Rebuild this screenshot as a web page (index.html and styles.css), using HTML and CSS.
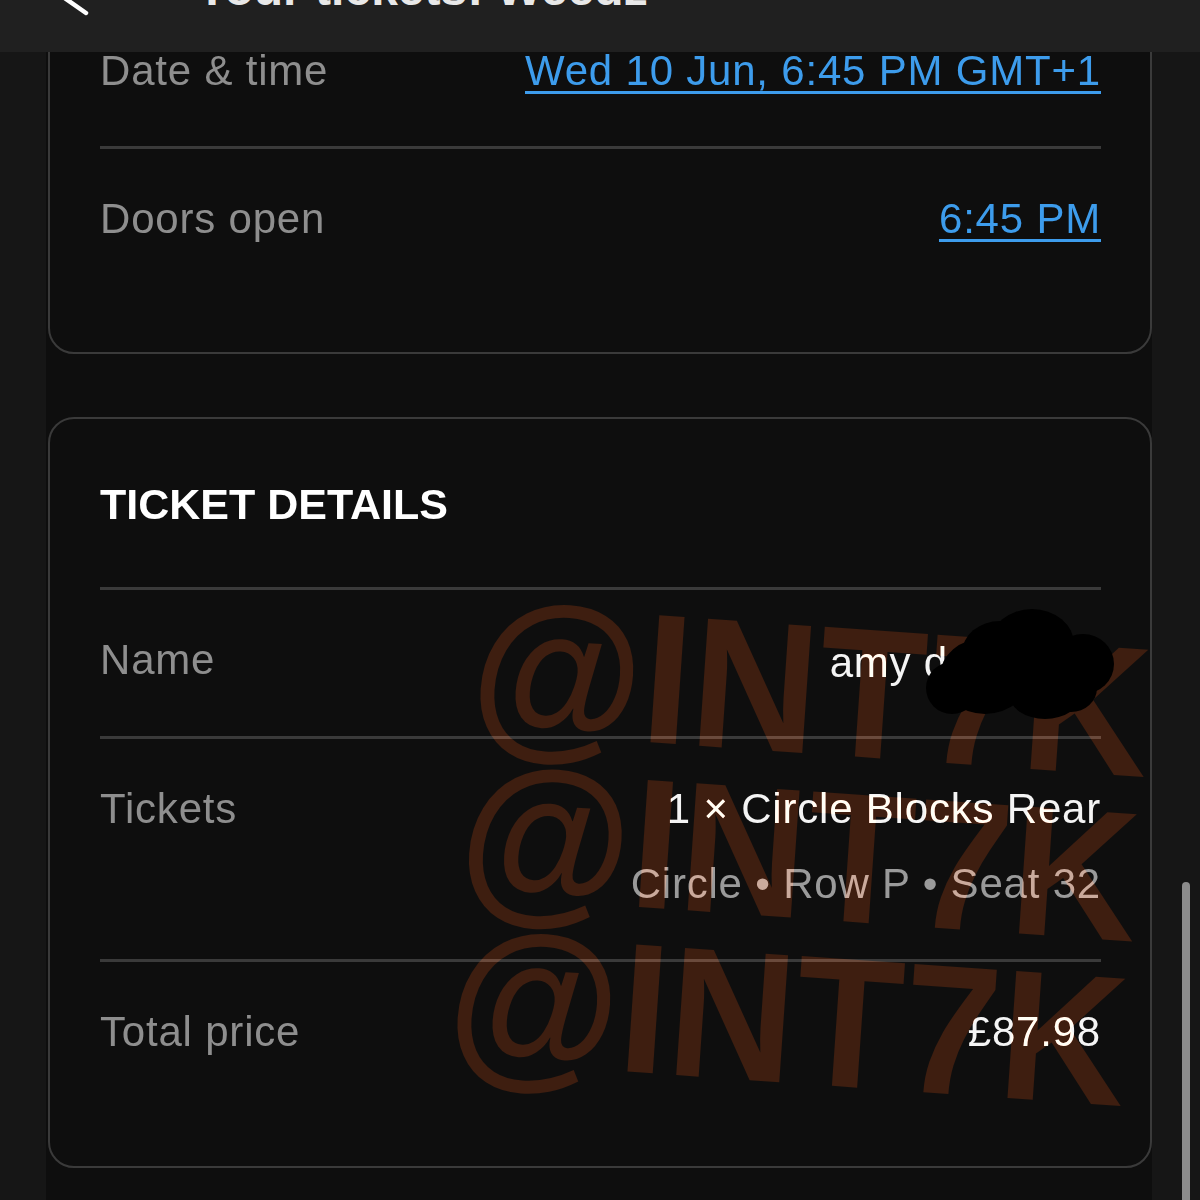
FILE: index.html
```html
<!DOCTYPE html>
<html lang="en">
<head>
    <meta charset="UTF-8">
    <meta name="viewport" content="width=device-width, initial-scale=1.0">
    <title>Your tickets</title>
    <link rel="stylesheet" href="styles.css">
</head>
<body>
    <div class="topbar">
        <div class="topbar-inner">
            <svg class="back" width="40" height="56" viewBox="0 0 40 56">
                <path d="M34 9 L4 31 L34 52" fill="none" stroke="#ffffff" stroke-width="4.5" stroke-linecap="round" stroke-linejoin="round"/>
            </svg>
            <h1 class="title">Your tickets: Weedz</h1>
        </div>
    </div>

    <div class="page">
        <div class="card card-first">
            <div class="row">
                <span class="label">Date &amp; time</span>
                <a class="value link" href="#">Wed 10 Jun, 6:45 PM GMT+1</a>
            </div>
            <div class="row">
                <span class="label">Doors open</span>
                <a class="value link" href="#">6:45 PM</a>
            </div>
        </div>

        <div class="card card-details">
            <!-- watermark sits over the rows -->
            <div class="watermark">@INT7K<br>@INT7K<br>@INT7K</div>

            <h2 class="card-title">TICKET DETAILS</h2>
            <div class="row">
                <span class="label">Name</span>
                <span class="value">amy d<span class="redact"><svg width="190" height="112" viewBox="0 0 190 112">
                    <g fill="#000">
                        <ellipse cx="107" cy="36" rx="42" ry="35"/>
                        <ellipse cx="75" cy="45" rx="38" ry="32"/>
                        <ellipse cx="60" cy="68" rx="45" ry="38"/>
                        <ellipse cx="27" cy="80" rx="26" ry="26"/>
                        <ellipse cx="158" cy="56" rx="31" ry="30"/>
                        <ellipse cx="120" cy="86" rx="36" ry="25"/>
                        <ellipse cx="146" cy="80" rx="26" ry="24"/>
                        <ellipse cx="110" cy="62" rx="40" ry="30"/>
                    </g>
                </svg></span></span>
            </div>
            <div class="row">
                <span class="label">Tickets</span>
                <div class="value-stack">
                    <span class="value">1 × Circle Blocks Rear</span>
                    <span class="sub">Circle • Row P • Seat 32</span>
                </div>
            </div>
            <div class="row">
                <span class="label">Total price</span>
                <span class="value">£87.98</span>
            </div>
        </div>
    </div>

    <div class="scroll-thumb"></div>
</body>
</html>
```

FILE: styles.css
```css
body {
    margin: 0;
    padding: 0;
    background: #161616;
    font-family: 'Liberation Sans', Arial, sans-serif;
    color: #f2f2f2;
    height: 1200px;
    overflow: hidden;
}

.topbar {
    position: fixed;
    top: 0;
    left: 0;
    right: 0;
    height: 52px;
    overflow: hidden;
    background: #202020;
    z-index: 10;
}

.topbar-inner {
    display: flex;
    align-items: center;
    height: 56px;
    margin-top: -39px;
    padding-left: 52px;
}

.back {
    overflow: visible;
    flex-shrink: 0;
}

.title {
    margin: 0 0 0 104px;
    font-size: 48px;
    line-height: 56px;
    font-weight: bold;
    color: #e8e8e8;
}

.page {
    margin-left: 46px;
    width: 1106px;
    min-height: 1200px;
    background: #0e0e0e;
    padding-top: 1px;
    box-sizing: border-box;
}

.card {
    position: relative;
    margin: 0 0 0 2px;
    padding: 0 49px 59px 50px;
    border: 2px solid #3a3a3a;
    border-radius: 26px;
    background: #0e0e0e;
}

.card-first {
    margin-top: -3px;
    padding-bottom: 58px;
}

.card-details {
    margin-top: 63px;
    padding-top: 60px;
}

.card-title {
    margin: 0;
    padding-bottom: 58px;
    font-size: 43px;
    line-height: 50px;
    font-weight: bold;
    color: #ffffff;
}

.row {
    display: flex;
    justify-content: space-between;
    align-items: flex-start;
    padding: 45px 0 50px;
    border-top: 3px solid #3a3a3a;
    font-size: 42px;
    line-height: 50px;
    letter-spacing: 0.8px;
}

.card-first .row:first-child {
    border-top: none;
    padding-top: 46px;
    padding-bottom: 50px;
}

.card-details .row:nth-of-type(2) {
    padding-bottom: 48px;
}

.label {
    color: #8e8e8e;
}

.value {
    color: #f4f4f4;
    text-align: right;
}

.link {
    color: #3d9cec;
    text-decoration: underline;
    text-decoration-thickness: 3px;
    text-underline-offset: 6px;
}

.value-stack {
    display: flex;
    flex-direction: column;
    align-items: flex-end;
    gap: 25px;
}

.sub {
    color: #9a9a9a;
}

.redact {
    position: relative;
    display: inline-block;
    width: 153px;
    height: 42px;
}

.redact svg {
    position: absolute;
    left: -23px;
    top: -27px;
}

.watermark {
    position: absolute;
    left: 428px;
    top: 165px;
    font-size: 185px;
    line-height: 165px;
    font-weight: bold;
    color: rgb(48, 16, 2);
    mix-blend-mode: plus-lighter;
    white-space: nowrap;
    transform-origin: left top;
    transform: rotate(4deg) scaleX(0.95);
    pointer-events: none;
}

.scroll-thumb {
    position: fixed;
    right: 10px;
    top: 882px;
    width: 8px;
    height: 340px;
    border-radius: 4px;
    background: #8c8c8c;
}
```
